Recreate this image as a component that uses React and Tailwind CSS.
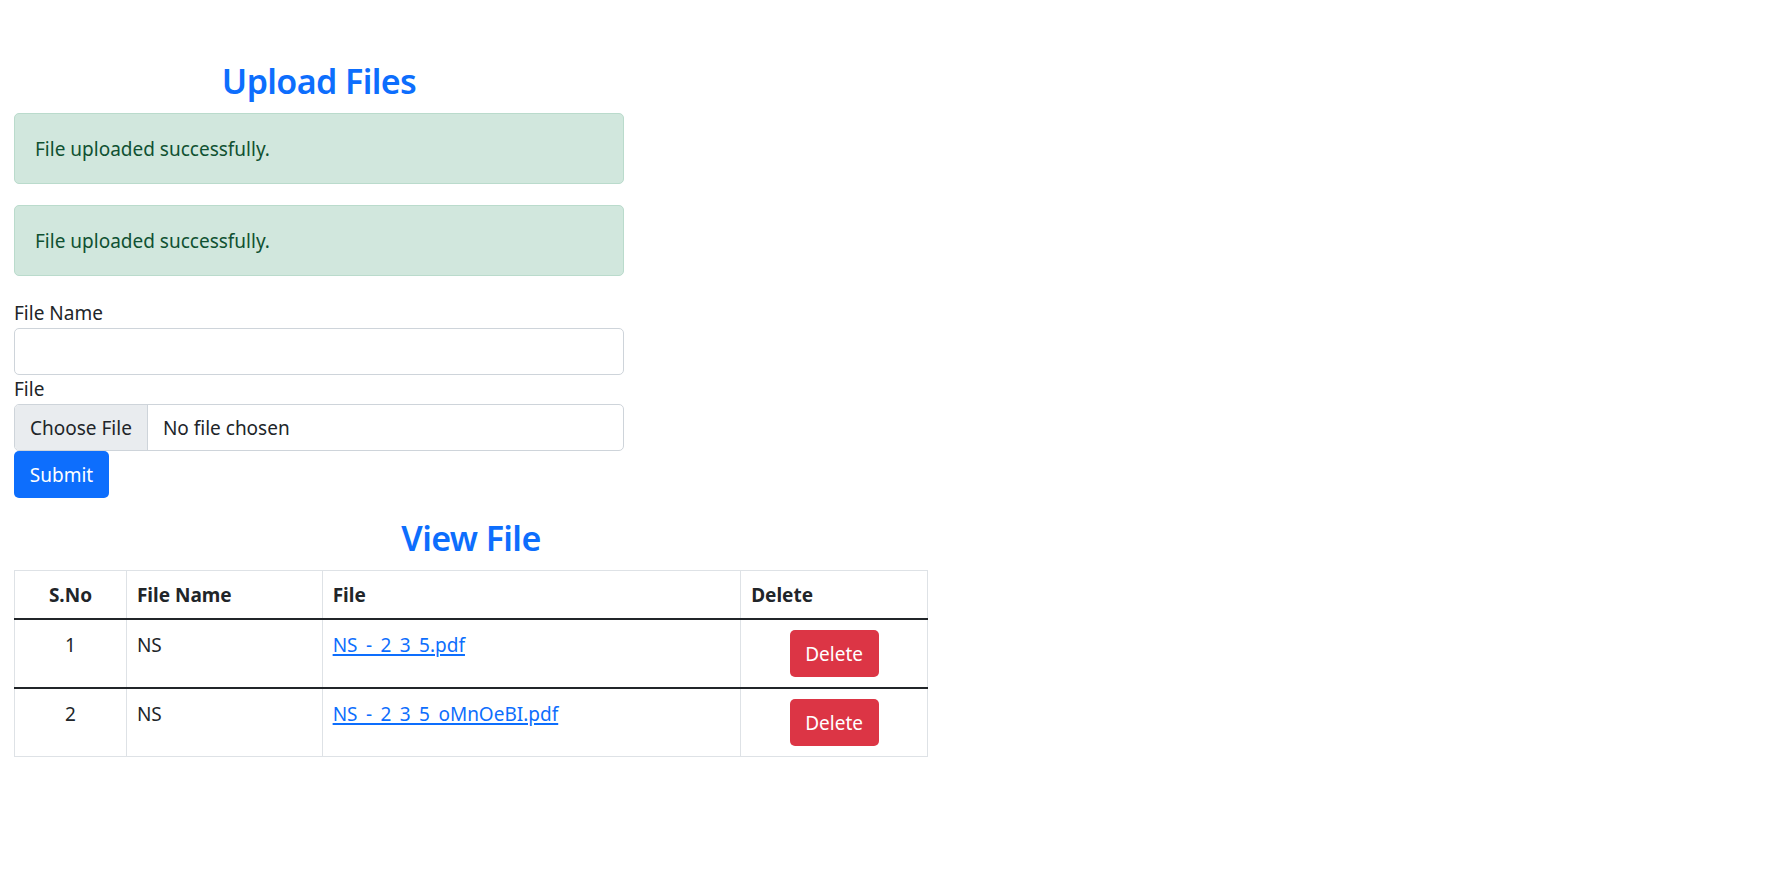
const rows = [
  { id: 1, name: "NS", file: "NS_-_2_3_5.pdf" },
  { id: 2, name: "NS", file: "NS_-_2_3_5_oMnOeBI.pdf" },
];

function Alert({ last }) {
  return (
    <div
      className={
        "bg-[#d1e7dd] border border-[#badbcc] text-[#0f5132] rounded-[5px] px-[20px] h-[71px] flex items-center " +
        (last ? "mb-[22px]" : "mb-[21px]")
      }
    >
      File uploaded successfully.
    </div>
  );
}

export default function App() {
  return (
    <div className="min-h-screen bg-white text-[#212529] text-[19px] leading-[30px] font-['Noto_Sans',sans-serif]">
      <div className="pt-[57px] pl-[14px]">
        {/* Upload form */}
        <div className="w-[610px]">
          <h2 className="text-center text-[34px] leading-[48px] font-semibold tracking-[-0.6px] text-[#0d6efd] mb-[8px]">
            Upload Files
          </h2>
          <Alert />
          <Alert last />
          <label className="block">File Name</label>
          <input
            type="text"
            className="block w-full h-[47px] border border-[#ced4da] rounded-[5px] px-[15px] outline-none"
          />
          <label className="block leading-[29px]">File</label>
          <div className="flex h-[47px] border border-[#ced4da] rounded-[5px] overflow-hidden">
            <div className="bg-[#e9ecef] border-r border-[#ced4da] px-[15px] flex items-center">
              Choose File
            </div>
            <div className="flex items-center pl-[15px]">No file chosen</div>
          </div>
          <button className="block h-[47px] w-[95px] bg-[#0d6efd] text-white rounded-[5px]">
            Submit
          </button>
        </div>

        {/* File list */}
        <div className="w-[914px]">
          <h2 className="text-center text-[34px] leading-[48px] font-semibold tracking-[-0.6px] text-[#0d6efd] mt-[16px] mb-[8px]">
            View File
          </h2>
          <table className="w-full border-collapse border border-[#dee2e6] align-top">
            <thead>
              <tr>
                <th className="w-[112px] border border-[#dee2e6] px-[10px] pt-[9px] pb-[8px] text-center font-bold">S.No</th>
                <th className="w-[196px] border border-[#dee2e6] px-[10px] pt-[9px] pb-[8px] text-left font-bold">File Name</th>
                <th className="w-[419px] border border-[#dee2e6] px-[10px] pt-[9px] pb-[8px] text-left font-bold">File</th>
                <th className="w-[187px] border border-[#dee2e6] px-[10px] pt-[9px] pb-[8px] text-left font-bold">Delete</th>
              </tr>
            </thead>
            {rows.map((r) => (
              <tbody key={r.id} className="border-t-2 border-t-[#212529]">
                <tr>
                  <td className="border-x border-b border-[#dee2e6] p-[10px] text-center align-top">{r.id}</td>
                  <td className="border-x border-b border-[#dee2e6] p-[10px] align-top">{r.name}</td>
                  <td className="border-x border-b border-[#dee2e6] p-[10px] align-top">
                    <a href="#" className="text-[#0d6efd] underline underline-offset-[2px] decoration-[1.5px]">
                      {r.file}
                    </a>
                  </td>
                  <td className="border-x border-b border-[#dee2e6] p-[10px] text-center align-top">
                    <button className="h-[47px] w-[89px] bg-[#dc3545] text-white rounded-[5px]">
                      Delete
                    </button>
                  </td>
                </tr>
              </tbody>
            ))}
          </table>
        </div>
      </div>
    </div>
  );
}
